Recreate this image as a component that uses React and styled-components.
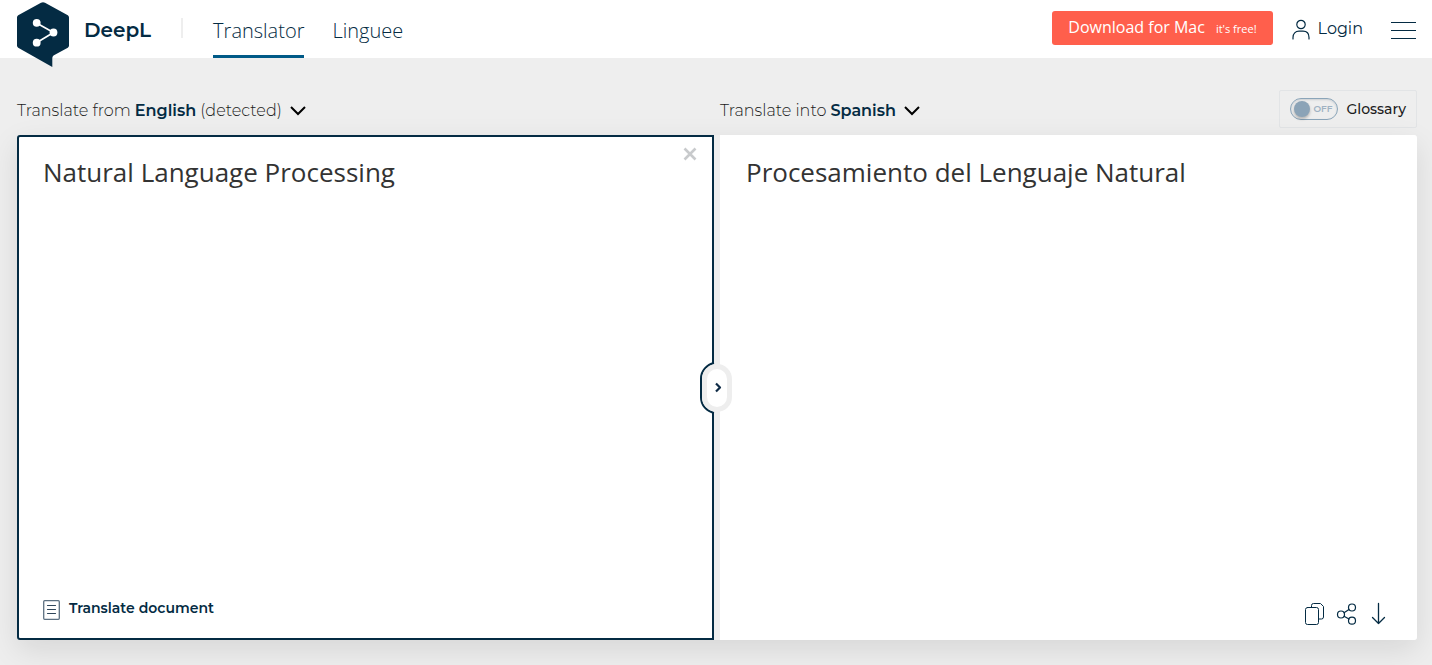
import React, { useState } from "react";
import styled, { createGlobalStyle } from "styled-components";

const navy = "#0f2b46";
const ink = "#042b43";
const brandFont = `Montserrat, Inter, "Open Sans", sans-serif`;
const bodyFont = `"Open Sans", "Noto Sans", sans-serif`;

const GlobalStyle = createGlobalStyle`
  *, *::before, *::after { box-sizing: border-box; }
  body { margin: 0; background: #eeeeee; color: #333333; font-family: ${bodyFont}; }
  button, textarea, input { font: inherit; color: inherit; margin: 0; }
  button { padding: 0; border: 0; background: none; cursor: pointer; }
  a { color: inherit; text-decoration: none; }
  svg { display: block; flex: none; }
`;

const Page = styled.div`
  min-height: 100vh;
  display: flex;
  flex-direction: column;
`;

const Header = styled.header`
  height: 58px;
  padding: 0 16px 0 17px;
  display: flex;
  align-items: flex-start;
  justify-content: space-between;
  background: #ffffff;
`;

const HeaderGroup = styled.div`
  height: 58px;
  display: flex;
  align-items: flex-start;
`;

const Brand = styled.a`
  display: flex;
  gap: 15px;
  padding-top: 2px;
`;

const BrandName = styled.span`
  padding-top: 14px;
  font: 600 20px/28px ${brandFont};
  color: ${ink};
`;

const Divider = styled.span`
  width: 2px;
  height: 20px;
  margin: 18px 30px 0;
  background: #eeeeee;
`;

const Nav = styled.nav`
  display: flex;
  gap: 28px;
`;

const NavLink = styled.a`
  height: 58px;
  padding-top: 17px;
  border-bottom: 3px solid ${(p) => (p.$active ? "#005a87" : "transparent")};
  font-size: 20px;
  font-weight: 300;
  line-height: 28px;
  color: ${ink};
`;

const DownloadButton = styled.button`
  height: 34px;
  margin-top: 11px;
  padding: 0 16px;
  display: flex;
  align-items: baseline;
  gap: 11px;
  border-radius: 3px;
  background: #ff5f4c;
  color: #ffffff;
  font-size: 16px;
  font-weight: 400;
  line-height: 32px;
`;

const Small = styled.span`
  font-size: 11px;
  font-weight: 400;
`;

const LoginLink = styled.a`
  margin: 16px 28px 0 19px;
  display: flex;
  gap: 8px;
  font: 400 16px/26px ${brandFont};
  color: ${ink};
  svg { margin-top: 3px; }
`;

const MenuButton = styled.button`
  margin-top: 21px;
`;

const Main = styled.main`
  flex: 1;
  display: flex;
  flex-direction: column;
  padding: 32px 15px 25px 17px;
`;

const LanguageBar = styled.div`
  height: 45px;
  display: grid;
  grid-template-columns: 1fr 1fr;
  gap: 6px;
`;

const LanguageCell = styled.div`
  display: flex;
  align-items: flex-start;
  justify-content: space-between;
`;

const LanguageButton = styled.button`
  margin-top: 9px;
  display: flex;
  align-items: center;
  gap: 8px;
  font: 300 16px/24px ${brandFont};
  white-space: nowrap;
  color: #1b1b1b;
  strong { font-weight: 600; color: ${ink}; }
`;

const Glossary = styled.label`
  height: 38px;
  padding: 0 10px;
  display: flex;
  align-items: center;
  gap: 8px;
  border: 1px solid #e2e4e6;
  border-radius: 2px;
  font: 500 14px/20px ${brandFont};
  color: #1b1c21;
  cursor: pointer;
`;

const Switch = styled.span`
  display: grid;
  align-items: center;
  width: 48px;
  height: 22px;
  > * { grid-area: 1 / 1; }
`;

const SwitchInput = styled.input`
  appearance: none;
  width: 48px;
  height: 22px;
  padding: 2px 3px;
  display: flex;
  justify-content: flex-start;
  border: 1px solid #8ba5b9;
  border-radius: 11px;
  box-shadow: inset 0 1px 2px rgba(15, 43, 70, 0.15);
  cursor: pointer;
  &::before {
    content: "";
    width: 16px;
    height: 16px;
    border-radius: 8px;
    background: #8ba3b7;
    box-shadow: 0 2px 3px rgba(0, 0, 0, 0.25);
  }
  &:checked { justify-content: flex-end; }
`;

const SwitchText = styled.span`
  padding: ${(p) => (p.$on ? "0 0 0 7px" : "0 0 0 23px")};
  font-size: 9px;
  line-height: 12px;
  font-weight: 600;
  color: #9fb2c3;
  pointer-events: none;
`;

const Panels = styled.div`
  position: relative;
  flex: 1;
  min-height: 320px;
  display: grid;
  grid-template-columns: 1fr 1fr;
  gap: 6px;
  border-radius: 3px;
  background: #eeeeee;
  box-shadow: 0 10px 30px rgba(0, 0, 0, 0.1);
`;

const Panel = styled.section`
  display: flex;
  flex-direction: column;
  padding: ${(p) => (p.$focused ? "17px 15px 18px 24px" : "19px 28px 14px 26px")};
  border: ${(p) => (p.$focused ? `2px solid ${ink}` : "0")};
  border-radius: ${(p) => (p.$focused ? "3px 0 0 3px" : "0 3px 3px 0")};
  background: #ffffff;
`;

const PanelTop = styled.div`
  flex: 1;
  display: flex;
  align-items: flex-start;
`;

const TextArea = styled.textarea`
  flex: 1;
  align-self: stretch;
  min-width: 0;
  padding: 0;
  border: 0;
  outline: 0;
  resize: none;
  background: transparent;
  color: #333333;
  font-size: 26px;
  line-height: 36px;
`;

const ClearButton = styled.button`
  margin-top: -7px;
`;

const PanelFooter = styled.div`
  display: flex;
  justify-content: ${(p) => (p.$end ? "flex-end" : "flex-start")};
  gap: 10px;
`;

const DocumentButton = styled.button`
  display: flex;
  gap: 9px;
  font: 600 14px/20px ${brandFont};
  color: ${ink};
`;

const SwapButton = styled.button`
  position: absolute;
  top: 50%;
  left: 50%;
  width: 34px;
  height: 52px;
  transform: translate(-50%, -50%);
`;

const Icon = ({ w, h, children, stroke = ink, sw = 1 }) => (
  <svg
    width={w}
    height={h}
    viewBox={`0 0 ${w} ${h}`}
    fill="none"
    stroke={stroke}
    strokeWidth={sw}
    strokeLinecap="round"
    strokeLinejoin="round"
    aria-hidden="true"
  >
    {children}
  </svg>
);

const Logo = () => (
  <svg width="52" height="66" viewBox="0 0 52 66" aria-hidden="true">
    <path
      fill={ink}
      d="M1.2 13.3 24 .7Q26 -.4 28 .7L50.800 13.300Q52 14 52 15.500V43.500Q52 45 50.800 45.700L36.500 53.500Q35.300 54.500 35.300 56V65L1.200 45.700Q0 45 0 43.500V15.500Q0 14 1.200 13.300Z"
    />
    <path d="M19.500 21 36.500 30.500 19.500 40.700" fill="none" stroke="#fff" strokeWidth="1.700" />
    <circle cx="19.700" cy="20.800" r="3.900" fill="#fff" />
    <circle cx="36.500" cy="30.500" r="3.900" fill="#fff" />
    <circle cx="19.700" cy="40.700" r="3.900" fill="#fff" />
  </svg>
);

const Chevron = () => (
  <Icon w={16} h={10} stroke="#000" sw={2}>
    <path d="M1 1l7 7 7-7" strokeLinecap="butt" strokeLinejoin="miter" />
  </Icon>
);

export default function App() {
  const [text, setText] = useState("Natural Language Processing");
  const [glossary, setGlossary] = useState(false);

  return (
    <Page>
      <GlobalStyle />
      <Header>
        <HeaderGroup>
          <Brand href="#">
            <Logo />
            <BrandName>DeepL</BrandName>
          </Brand>
          <Divider />
          <Nav>
            <NavLink href="#translator" $active>Translator</NavLink>
            <NavLink href="#linguee">Linguee</NavLink>
          </Nav>
        </HeaderGroup>
        <HeaderGroup>
          <DownloadButton type="button">
            Download for Mac <Small>it's free!</Small>
          </DownloadButton>
          <LoginLink href="#login">
            <Icon w={18} h={21} sw={1.2}>
              <circle cx="9" cy="5.500" r="4.200" />
              <path d="M1 20V18.500C1 14.500 3.500 12.200 7 12.200H11C14.500 12.200 17 14.500 17 18.500V20" />
            </Icon>
            Login
          </LoginLink>
          <MenuButton type="button" aria-label="Menu">
            <Icon w={25} h={19}>
              <path d="M0 1.500H25M0 9.500H25M0 17.500H25" strokeLinecap="butt" />
            </Icon>
          </MenuButton>
        </HeaderGroup>
      </Header>

      <Main>
        <LanguageBar>
          <LanguageCell>
            <LanguageButton type="button" aria-haspopup="listbox">
              <span>Translate from <strong>English</strong> (detected)</span>
              <Chevron />
            </LanguageButton>
          </LanguageCell>
          <LanguageCell>
            <LanguageButton type="button" aria-haspopup="listbox">
              <span>Translate into <strong>Spanish</strong></span>
              <Chevron />
            </LanguageButton>
            <Glossary>
              <Switch>
                <SwitchInput
                  type="checkbox"
                  role="switch"
                  checked={glossary}
                  onChange={(e) => setGlossary(e.target.checked)}
                />
                <SwitchText $on={glossary}>{glossary ? "ON" : "OFF"}</SwitchText>
              </Switch>
              Glossary
            </Glossary>
          </LanguageCell>
        </LanguageBar>

        <Panels>
          <Panel $focused>
            <PanelTop>
              <TextArea
                aria-label="Source text"
                spellCheck={false}
                value={text}
                onChange={(e) => setText(e.target.value)}
              />
              <ClearButton type="button" aria-label="Clear text" onClick={() => setText("")}>
                <Icon w={14} h={14} stroke="#c8cacc" sw={2.6}>
                  <path d="M1.500 1.500l11 11M12.500 1.500L1.500 12.500" strokeLinecap="butt" />
                </Icon>
              </ClearButton>
            </PanelTop>
            <PanelFooter>
              <DocumentButton type="button">
                <Icon w={17} h={22} stroke="#2f465a">
                  <rect x="0.700" y="2.700" width="15.600" height="18.600" rx="1" stroke="#5d7182" strokeWidth="1.300" />
                  <path d="M4.500 7.500H12.500M4.500 11.500H12.500M4.500 15.500H12.500" strokeWidth="1.200" />
                </Icon>
                Translate document
              </DocumentButton>
            </PanelFooter>
          </Panel>

          <Panel>
            <PanelTop>
              <TextArea aria-label="Translation" spellCheck={false} readOnly value="Procesamiento del Lenguaje Natural" />
            </PanelTop>
            <PanelFooter $end>
              <button type="button" aria-label="Copy">
                <Icon w={22} h={24}>
                  <path d="M8.500 5V3.500Q8.500 1.500 10.500 1.500H17.500L20.500 4.500V15Q20.500 17 18.500 17H15.500" />
                  <rect x="2.500" y="5.500" width="13" height="17" rx="2" />
                </Icon>
              </button>
              <button type="button" aria-label="Share">
                <Icon w={22} h={24} sw={1.2}>
                  <circle cx="6" cy="12.500" r="3.500" />
                  <circle cx="17" cy="5.500" r="3.500" />
                  <circle cx="17" cy="18.700" r="3.500" />
                  <path d="M9 10.700l5-3.300M9 14.300l5 2.800" />
                </Icon>
              </button>
              <button type="button" aria-label="Download">
                <Icon w={22} h={24} sw={1.3}>
                  <path d="M11.500 1.500V21.500M5.500 15.500l6 6 6-6" />
                </Icon>
              </button>
            </PanelFooter>
          </Panel>

          <SwapButton type="button" aria-label="Swap languages">
            <Icon w={34} h={52} sw={2}>
              <path d="M14 1C7 2.500 1 8.500 1 16.500V35.500C1 43.500 7 49.500 14 51" fill="#eee" strokeLinecap="butt" />
              <rect x="2" y="2" width="30" height="48" rx="15" fill="#eee" stroke="none" />
              <rect x="7" y="7" width="20" height="38" rx="10" fill="#fff" stroke="none" />
              <path d="M16 21.500l4 4-4 4" strokeLinecap="butt" stroke={navy} strokeWidth="2.200" />
            </Icon>
          </SwapButton>
        </Panels>
      </Main>
    </Page>
  );
}
